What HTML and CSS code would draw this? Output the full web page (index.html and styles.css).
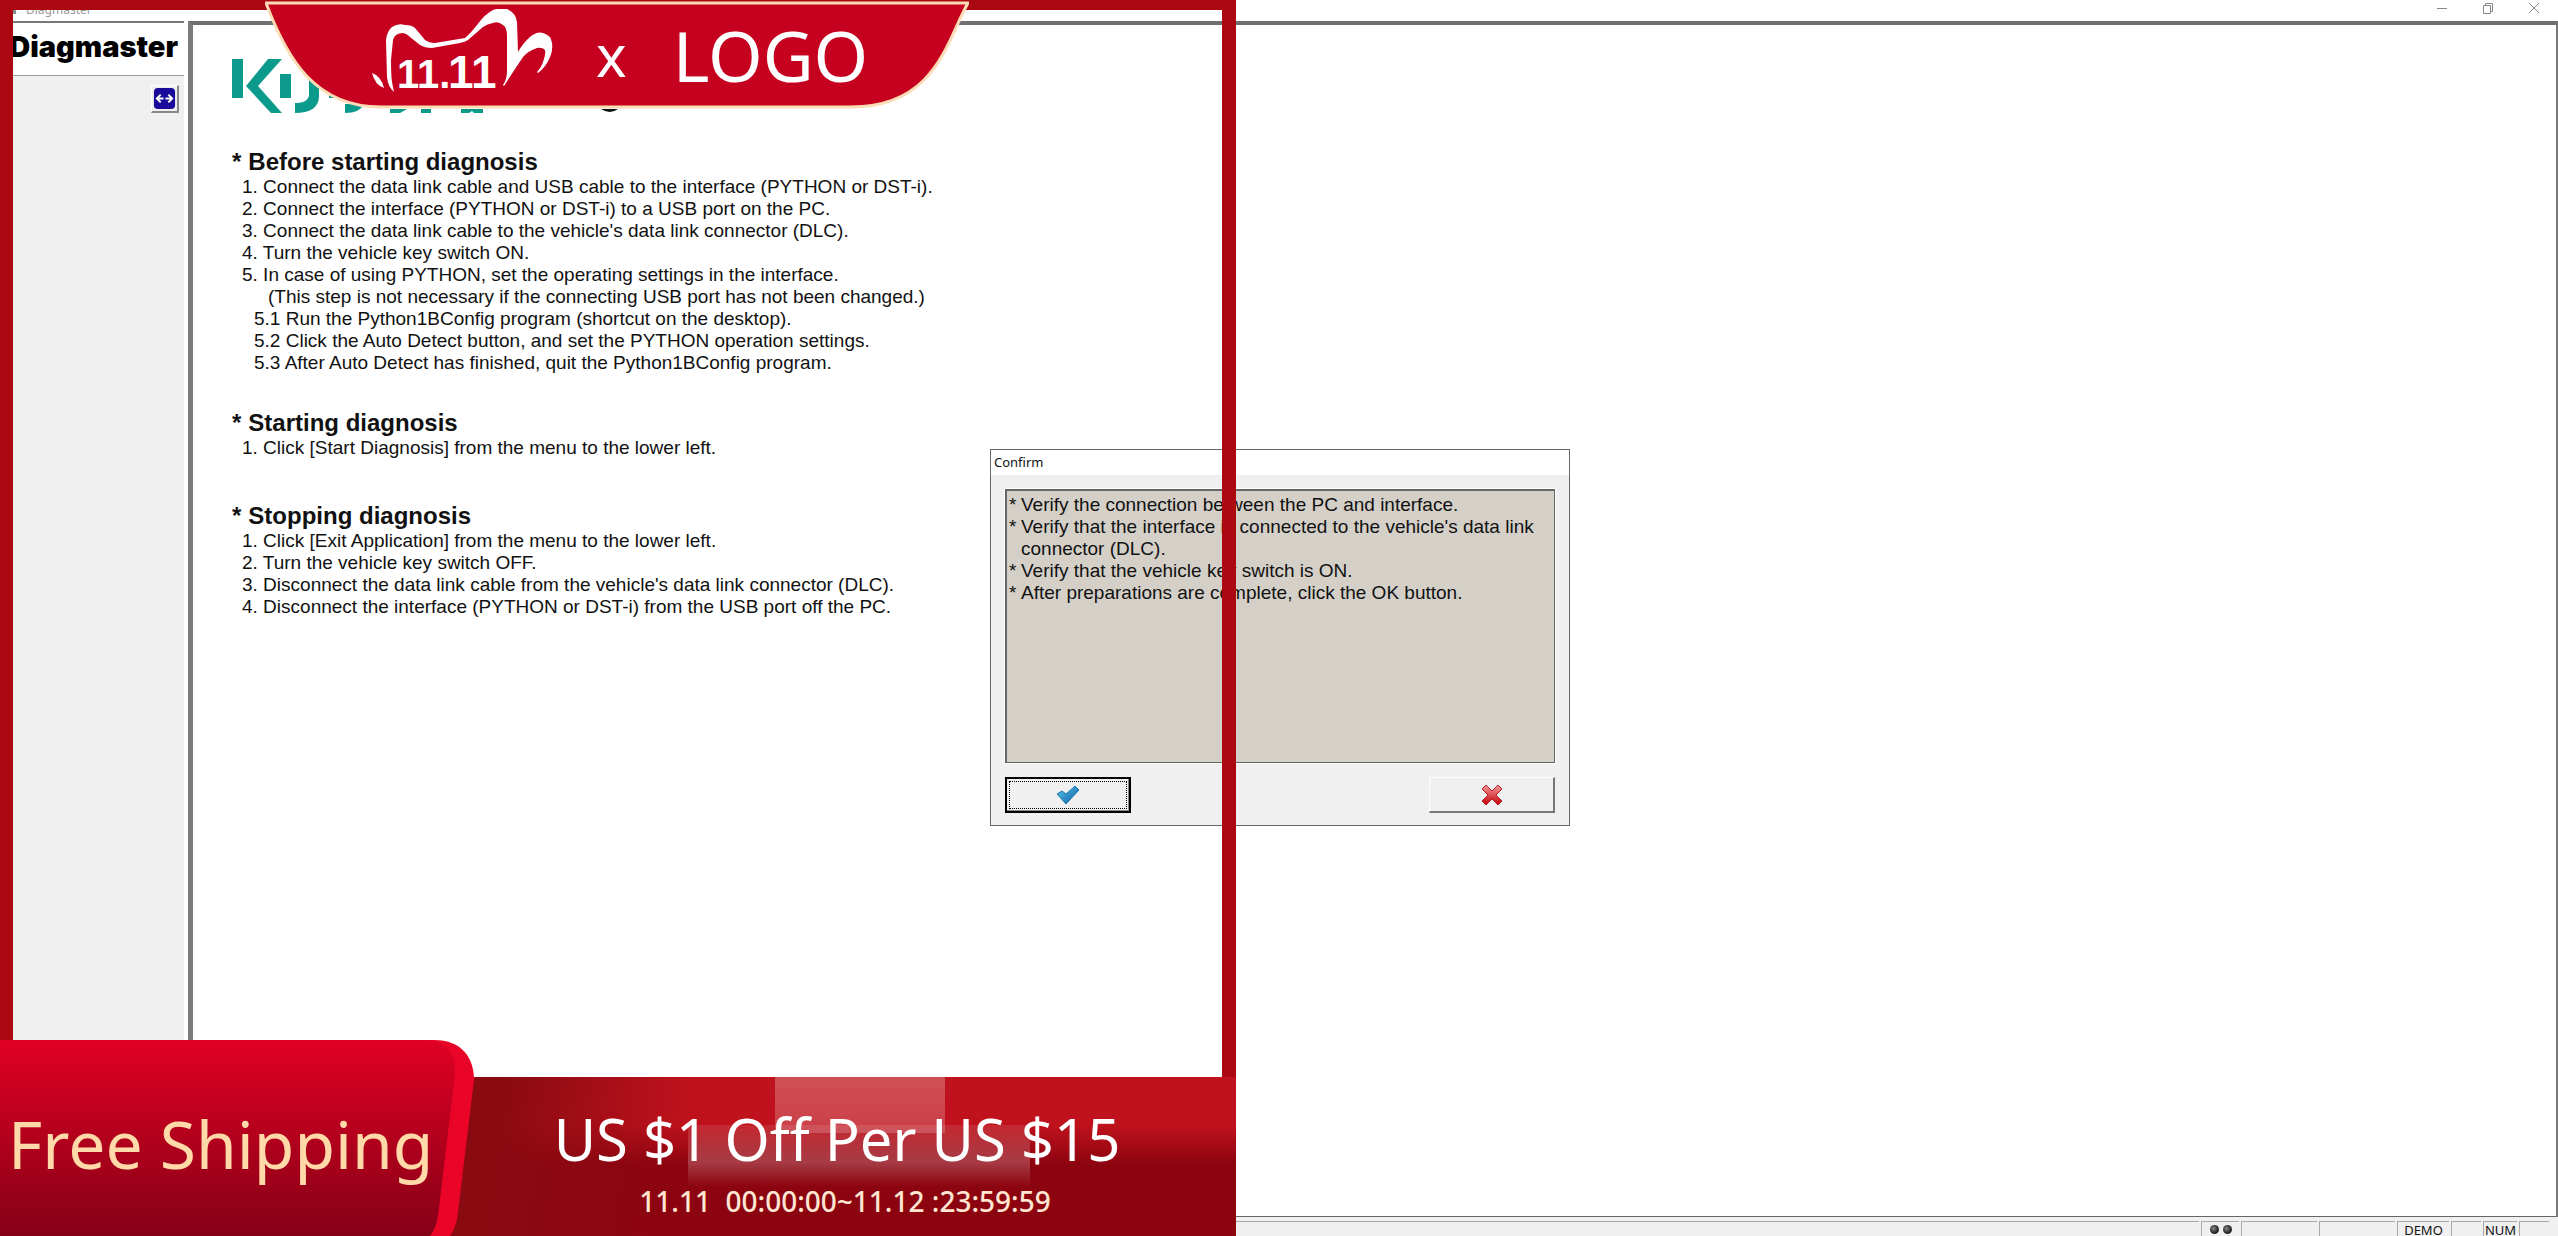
FILE: index.html
```
<!DOCTYPE html>
<html lang="en">

<head>
    <meta charset="utf-8">
    <title>Diagmaster</title>
    <link rel="stylesheet" href="styles.css">
</head>

<body>
    <div class="app">
        <header class="titlebar">
            <span class="app-name"><span class="app-icon"></span>Diagmaster</span>
            <nav class="window-buttons">
                <button type="button" aria-label="Minimize">
                    <svg viewBox="0 0 12 12"><path d="M1 6.500H11" /></svg>
                </button>
                <button type="button" aria-label="Restore">
                    <svg viewBox="0 0 12 12"><path d="M1.500 3.500h7v8h-7zM3.500 3.500v-2h7v8h-2" /></svg>
                </button>
                <button type="button" aria-label="Close">
                    <svg viewBox="0 0 12 12"><path d="M1 1L11 11M11 1L1 11" /></svg>
                </button>
            </nav>
        </header>

        <div class="workspace">
            <aside class="sidebar">
                <h1>Diagmaster</h1>
                <div class="tools">
                    <button type="button" class="resize" aria-label="Resize menu">
                        <svg viewBox="0 0 24 24">
                            <rect x="1" y="1" width="22" height="22" rx="4" fill="#1a0a9c" />
                            <path d="M4 12H11M13 12H20M8 8L4 12L8 16M16 8L20 12L16 16" fill="none" stroke="#fff" stroke-width="2" />
                        </svg>
                    </button>
                </div>
            </aside>

            <main class="page">
                <svg class="brand" viewBox="0 0 420 54" role="img" aria-label="Kubota">
                    <g fill="#0c9a8c">
                        <path d="M0 0H11V39H0zM36 0H50L26 27L50 54H39L14 27z" />
                        <path d="M48 15H59V39H48zM77 15H87V38Q86 54 63 54V44Q76 44 77 36z" />
                        <path d="M97 28H106V39H97zM113 45H132Q128 54 113 54z" />
                        <path d="M158 50H175L168 54H158zM189 50H199V54H189zM229 50H251V54H242L240 52L237 54H229z" />
                    </g>
                    <path d="M369 50H386Q378 56 369 50z" fill="#111" />
                </svg>

                <section class="guide">
                    <h2><span>*</span>Before starting diagnosis</h2>
                    <p>1. Connect the data link cable and USB cable to the interface (PYTHON or DST-i).</p>
                    <p>2. Connect the interface (PYTHON or DST-i) to a USB port on the PC.</p>
                    <p>3. Connect the data link cable to the vehicle's data link connector (DLC).</p>
                    <p>4. Turn the vehicle key switch ON.</p>
                    <p>5. In case of using PYTHON, set the operating settings in the interface.</p>
                    <p class="note">(This step is not necessary if the connecting USB port has not been changed.)</p>
                    <p class="sub">5.1 Run the Python1BConfig program (shortcut on the desktop).</p>
                    <p class="sub">5.2 Click the Auto Detect button, and set the PYTHON operation settings.</p>
                    <p class="sub">5.3 After Auto Detect has finished, quit the Python1BConfig program.</p>
                </section>
                <section class="guide">
                    <h2><span>*</span>Starting diagnosis</h2>
                    <p>1. Click [Start Diagnosis] from the menu to the lower left.</p>
                </section>
                <section class="guide">
                    <h2><span>*</span>Stopping diagnosis</h2>
                    <p>1. Click [Exit Application] from the menu to the lower left.</p>
                    <p>2. Turn the vehicle key switch OFF.</p>
                    <p>3. Disconnect the data link cable from the vehicle's data link connector (DLC).</p>
                    <p>4. Disconnect the interface (PYTHON or DST-i) from the USB port off the PC.</p>
                </section>
            </main>
        </div>

        <footer class="statusbar">
            <span class="cell fill"></span>
            <span class="cell lamps"><i></i><i></i></span>
            <span class="cell wide"></span>
            <span class="cell wide"></span>
            <span class="cell demo">DEMO</span>
            <span class="cell small"></span>
            <span class="cell num">NUM</span>
            <span class="cell small"></span>
        </footer>
    </div>

    <div class="dialog" role="dialog" aria-labelledby="dialog-title">
        <h3 id="dialog-title">Confirm</h3>
        <div class="dialog-body">
            <ul class="message">
                <li>Verify the connection between the PC and interface.</li>
                <li>Verify that the interface is connected to the vehicle's data link connector (DLC).</li>
                <li>Verify that the vehicle key switch is ON.</li>
                <li>After preparations are complete, click the OK button.</li>
            </ul>
            <div class="actions">
                <button type="button" class="ok" aria-label="OK">
                    <svg viewBox="0 0 24 20">
                        <defs>
                            <linearGradient id="blue" x1="0" y1="0" x2="1" y2="1">
                                <stop offset="0" stop-color="#5cc4ee" />
                                <stop offset="1" stop-color="#0b5c9e" />
                            </linearGradient>
                        </defs>
                        <path d="M1 9L6 6L10 9L19 1L23 5L10 19z" fill="url(#blue)" stroke="#1b79b4" />
                    </svg>
                </button>
                <button type="button" class="cancel" aria-label="Cancel">
                    <svg viewBox="0 0 22 22">
                        <defs>
                            <linearGradient id="red" x1="0" y1="0" x2="0" y2="1">
                                <stop offset="0" stop-color="#f59a9a" />
                                <stop offset="1" stop-color="#c4000c" />
                            </linearGradient>
                        </defs>
                        <path d="M5 1L11 7L17 1L21 5L15 11L21 17L17 21L11 15L5 21L1 17L7 11L1 5z" fill="url(#red)" stroke="#b3202a" />
                    </svg>
                </button>
            </div>
        </div>
    </div>

    <div class="promo">
        <div class="ribbon">
            <svg class="ribbon-shape" viewBox="0 0 704 108" preserveAspectRatio="none">
                <path d="M1 2H703C682 38 672 106 586 106H116C50 106 22 58 1 2z" fill="#c6001f" stroke="#fbdcb4" stroke-width="3" />
            </svg>
            <svg class="festival" viewBox="0 0 184 92" role="img" aria-label="11.11 festival">
                <path d="M23 83Q17 78 16 68L15 31Q16 22 21 18Q27 14 34 16Q41 16 44 19L54 31Q58 34 64 34L94 29Q98 26 106 16Q114 5 122 1Q130 -2 136 0Q145 4 146 13L147 43Q152 34 159 28Q166 22 172 24Q180 26 181 34Q182 42 179 48Q175 58 167 64L166 63Q171 57 172 53Q176 42 173 40Q169 38 166 39Q157 42 152 48L142 63L133 77L132 76Q136 70 136 62V28Q136 18 132 16Q127 12 122 14Q116 15 112 18L97 31Q94 33 89 34L61 39Q54 39 49 36L39 28Q35 24 31 24Q23 25 22 31L20 51Q20 65 21 73z" fill="#fff" />
                <path d="M1 64Q10 67 13 79Q4 76 1 64z" fill="#fff" />
                <text y="79" fill="#fff" class="date-mark"><tspan x="26" font-size="40">11.</tspan><tspan x="77" font-size="46">11</tspan></text>
            </svg>
            <span class="times">x</span>
            <span class="logo-text">LOGO</span>
        </div>
        <div class="offer">
            <div class="offer-text">
                <strong>US $1 Off Per US $15</strong>
                <span>11.11&nbsp; 00:00:00~11.12 :23:59:59</span>
            </div>
        </div>
        <div class="shipping">
            <svg viewBox="0 0 474 196" preserveAspectRatio="none">
                <defs>
                    <linearGradient id="ship" x1="0" y1="0" x2="0" y2="1">
                        <stop offset="0" stop-color="#e00024" />
                        <stop offset="1" stop-color="#850016" />
                    </linearGradient>
                </defs>
                <path d="M0 0H434C462 0 474 18 474 40L457 180Q454 190 450 196H0z" fill="#e90428" />
                <path d="M0 0H420C446 0 456 12 455 34L438 176Q436 188 430 196H0z" fill="url(#ship)" />
            </svg>
            <span>Free Shipping</span>
        </div>
    </div>
</body>

</html>
```
FILE: styles.css
```
* {
    box-sizing: border-box;
    margin: 0;
    padding: 0;
}

html,
body {
    width: 100%;
    height: 100%;
}

body {
    position: relative;
    overflow: hidden;
    background-color: white;
    color: #111;
    font-family: "Liberation Sans", Arial, sans-serif;
    font-size: 19px;
    line-height: 22px;
}

svg {
    display: block;
}

.app {
    display: flex;
    flex-direction: column;
    height: 100%;
}

/* window title */
.titlebar {
    display: flex;
    justify-content: space-between;
    height: 21px;
    padding: 0 18px 0 12px;
}

.app-name {
    display: flex;
    gap: 10px;
    color: #999;
    font-family: "Noto Sans", sans-serif;
    font-size: 12px;
    line-height: 20px;
}

.app-icon {
    width: 4px;
    height: 14px;
    background-color: #888;
}

.window-buttons {
    display: flex;
    gap: 34px;
    padding-top: 2px;
}

.window-buttons button {
    width: 12px;
    height: 12px;
    border: 0;
    background: none;
}

.window-buttons svg {
    width: 12px;
    height: 12px;
    fill: none;
    stroke: #888;
}

.workspace {
    display: flex;
    flex: 1;
    gap: 4px;
}

.sidebar {
    width: 184px;
    border-top: 2px solid #777;
    background-color: #f0f0f0;
}

.sidebar h1 {
    height: 53px;
    padding-right: 6px;
    border-bottom: 1px solid #999;
    background-color: white;
    color: black;
    font-family: Inter, "DejaVu Sans", sans-serif;
    font-size: 29px;
    font-weight: 900;
    line-height: 48px;
    text-align: right;
}

.tools {
    display: flex;
    justify-content: flex-end;
    padding: 9px 5px;
}

.resize {
    width: 28px;
    height: 28px;
    padding: 1px;
    border: 1px solid white;
    border-right: 2px solid #888;
    border-bottom: 2px solid #888;
    background-color: #f0f0f0;
}

.page {
    flex: 1;
    padding: 34px 39px;
    border: 1px solid #666;
    border-top: 4px solid #707070;
    border-left: 5px solid #7c7c7c;
    border-right: 2px solid #777;
    background-color: white;
}

.brand {
    width: 420px;
    height: 54px;
    margin-bottom: 34px;
}

.guide {
    margin-bottom: 34px;
}

.guide + .guide {
    margin-bottom: 42px;
}

.guide h2 {
    font-size: 24px;
    line-height: 29px;
}

.guide h2 span {
    margin-right: 7px;
}

.guide p {
    padding-left: 10px;
}

.guide .note {
    padding-left: 36px;
}

.guide .sub {
    padding-left: 22px;
}

/* bottom status line */
.statusbar {
    display: flex;
    gap: 2px;
    height: 19px;
    padding: 4px 9px 0 0;
    background-color: #f0f0f0;
    font-family: "Noto Sans", sans-serif;
    font-size: 13px;
    line-height: 17px;
}

.cell {
    border-top: 1px solid #aaa;
    border-left: 1px solid #aaa;
    text-align: center;
}

.fill {
    flex: 1;
}

.lamps {
    display: flex;
    justify-content: center;
    gap: 4px;
    width: 38px;
    padding-top: 3px;
}

.lamps i {
    width: 9px;
    height: 9px;
    border-radius: 50%;
    background: radial-gradient(circle at 40% 40%, #888, #222 60%);
}

.wide {
    width: 76px;
}

.demo {
    width: 52px;
}

.small {
    width: 30px;
}

.num {
    width: 34px;
}

/* confirm window */
.dialog {
    position: absolute;
    top: 449px;
    left: 990px;
    width: 580px;
    border: 1px solid #666;
    background-color: #f0f0f0;
}

.dialog h3 {
    padding: 0 3px;
    background-color: white;
    font-family: "Noto Sans", sans-serif;
    font-size: 13px;
    font-weight: normal;
    line-height: 25px;
}

.dialog-body {
    padding: 14px 14px 12px;
}

.message {
    height: 274px;
    padding: 3px 2px;
    border: 2px solid #666;
    border-right: 1px solid #666;
    border-bottom: 1px solid #666;
    outline: 1px solid white;
    background-color: #d4d0c8;
    list-style: none;
}

.message li {
    display: flex;
}

.message li::before {
    content: "*";
    width: 12px;
    flex-shrink: 0;
}

.actions {
    display: flex;
    justify-content: space-between;
    margin-top: 14px;
}

.actions button {
    display: flex;
    align-items: center;
    justify-content: center;
    width: 126px;
    height: 36px;
    border: 1px solid white;
    border-right: 2px solid #777;
    border-bottom: 2px solid #777;
    background-color: #f0f0f0;
}

.actions .ok {
    border: 2px solid black;
    outline: 1px dotted black;
    outline-offset: -5px;
    box-shadow: inset -1px -1px #888;
}

.ok svg {
    width: 24px;
    height: 20px;
}

.cancel svg {
    width: 22px;
    height: 22px;
}

/* sale frame lying over the window */
.promo {
    position: absolute;
    top: 0;
    left: 0;
    height: 100%;
    aspect-ratio: 1;
    border: solid #ac0812;
    border-width: 10px 14px 0 13px;
    font-family: "Noto Sans", sans-serif;
}

.ribbon {
    position: absolute;
    top: -9px;
    left: 252px;
    display: flex;
    align-items: center;
    width: 704px;
    height: 108px;
    padding-left: 106px;
    color: white;
}

.ribbon-shape {
    position: absolute;
    top: 0;
    left: 0;
    width: 100%;
    height: 100%;
}

.festival {
    position: relative;
    width: 184px;
    height: 92px;
}

.date-mark {
    font-family: "Liberation Sans", Arial, sans-serif;
    font-weight: bold;
}

.times {
    position: relative;
    margin-left: 41px;
    font-size: 58px;
    line-height: 96px;
}

.logo-text {
    position: relative;
    margin-left: 46px;
    font-size: 70px;
    line-height: 96px;
}

.offer {
    position: absolute;
    right: -14px;
    bottom: 0;
    left: -13px;
    height: 159px;
    padding-left: 474px;
    background:
        linear-gradient(#ffffff42, #ffffff30) 775px 0 / 170px 56px no-repeat,
        linear-gradient(#ffffff18, #ffffff38 60%, #ffffff00) 688px 48px / 342px 62px no-repeat,
        linear-gradient(100deg, #8a0a12 40%, #8a0a1200 55%),
        linear-gradient(#bf121c 30%, #8c0410 55%, #8c0410);
}

.offer-text {
    display: flex;
    flex-direction: column;
    align-items: center;
    padding: 20px 36px 0 0;
    color: white;
}

.offer-text strong {
    font-size: 58px;
    font-weight: normal;
    line-height: 84px;
}

.offer-text span {
    padding-left: 16px;
    color: #ffe6d2;
    font-size: 28px;
    font-weight: 500;
    line-height: 40px;
}

.shipping {
    position: absolute;
    bottom: 0;
    left: -13px;
    width: 474px;
    height: 196px;
    padding-left: 8px;
    color: #ffd9a8;
    font-size: 66px;
    line-height: 206px;
}

.shipping svg {
    position: absolute;
    top: 0;
    left: 0;
    width: 100%;
    height: 100%;
}

.shipping span {
    position: relative;
}
```
